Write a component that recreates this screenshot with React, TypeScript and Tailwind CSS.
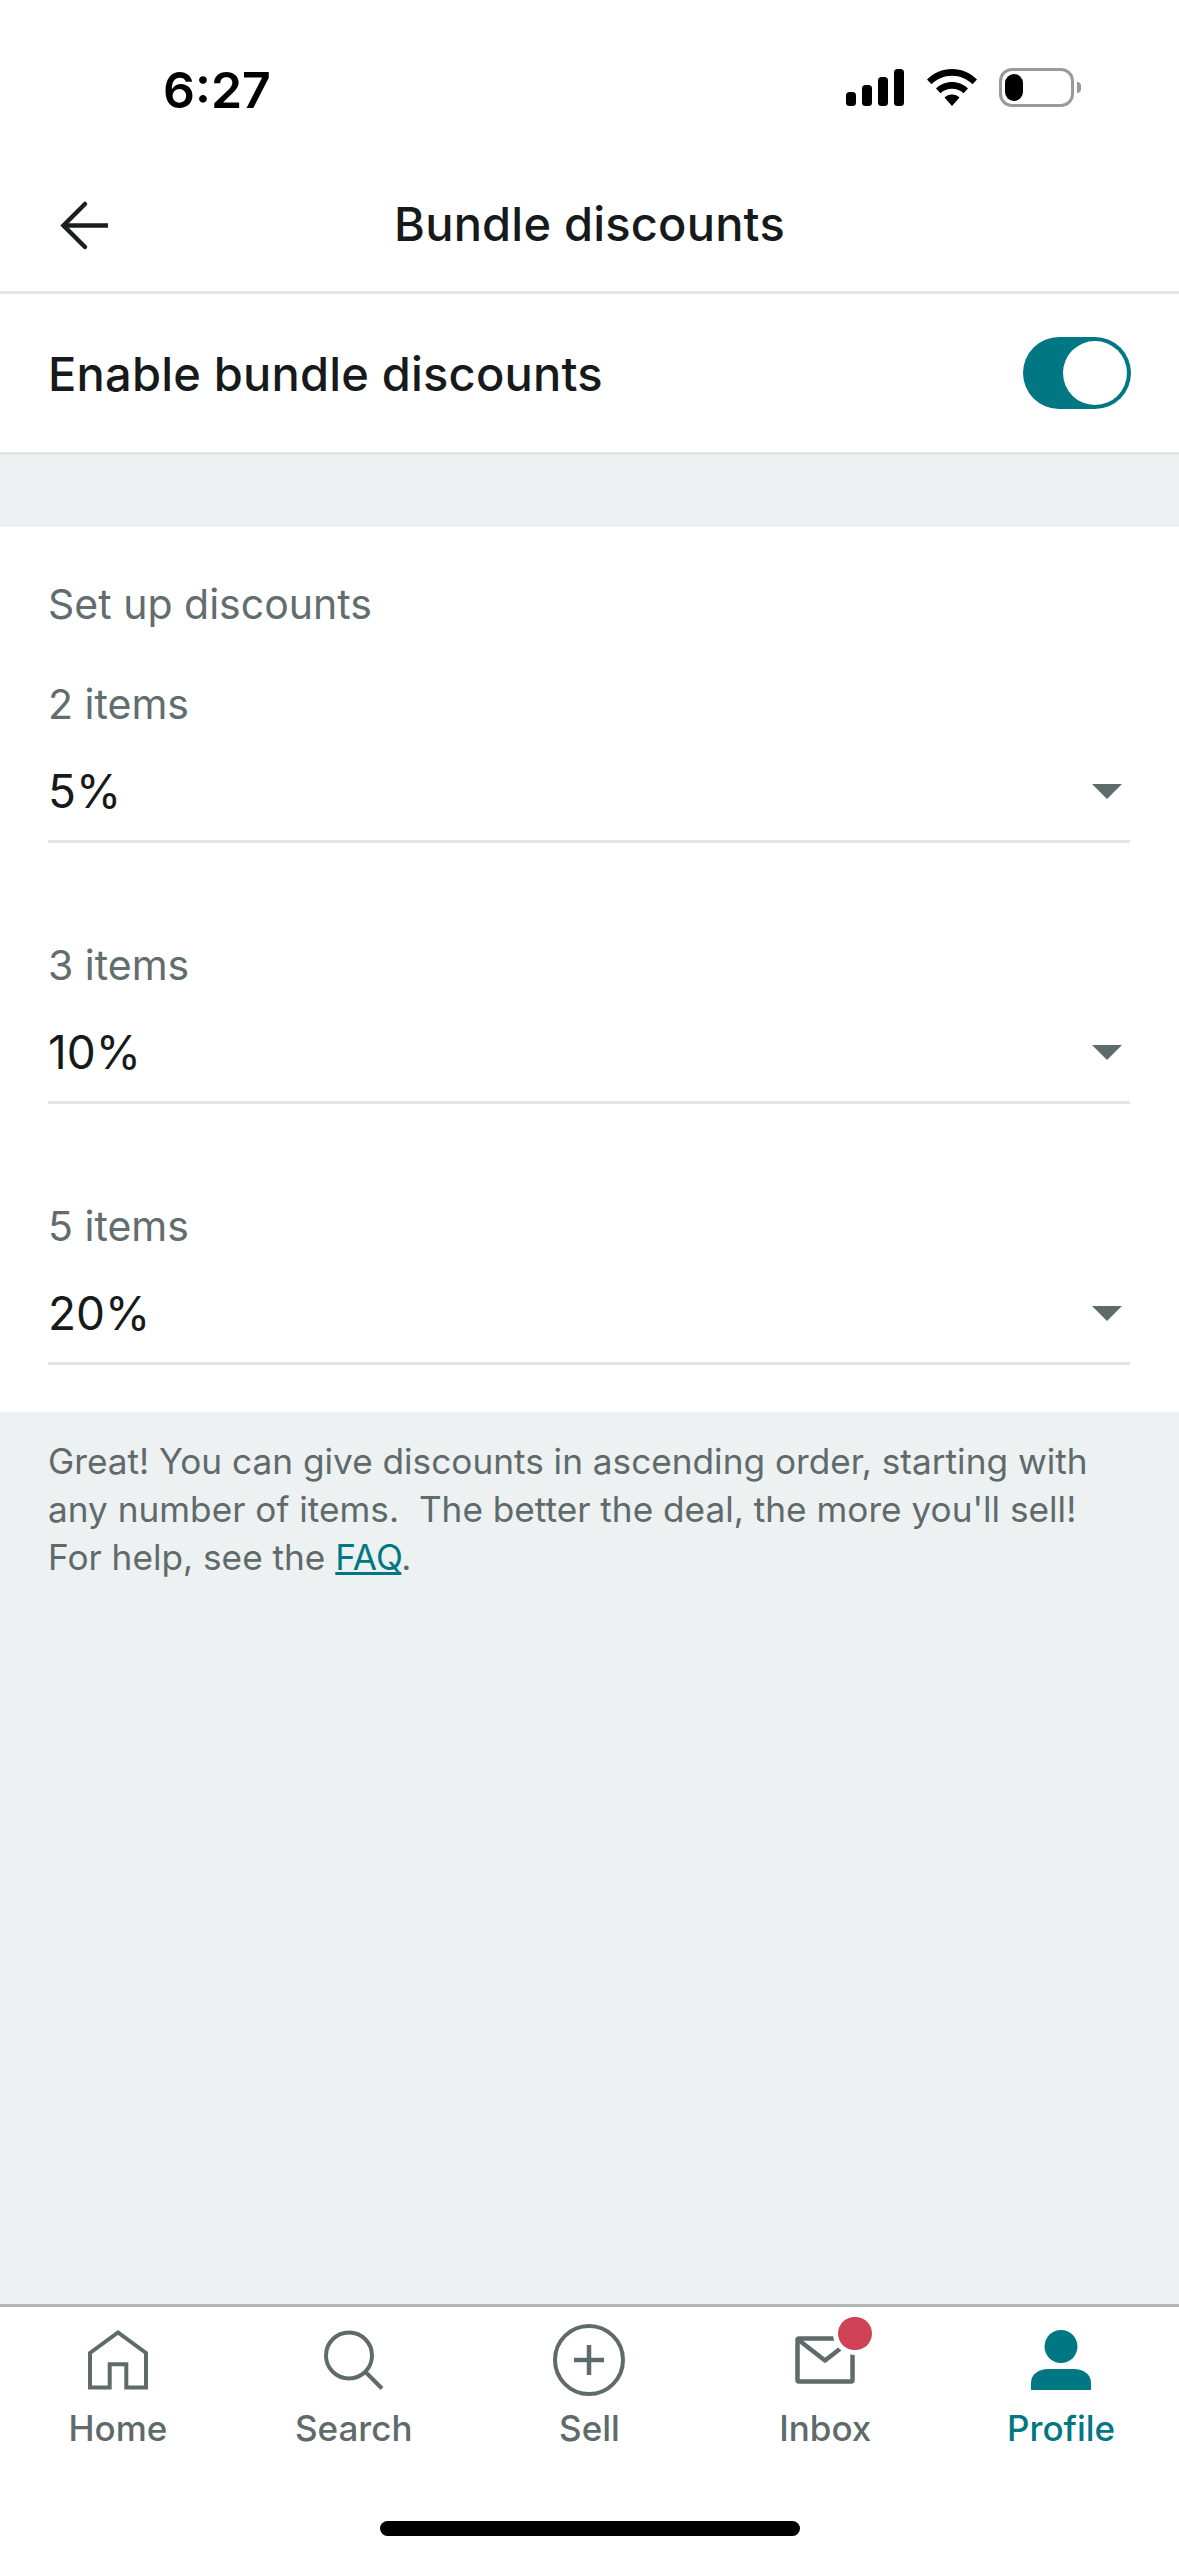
import React from "react";

const rows = [
  { label: "2 items", value: "5%" },
  { label: "3 items", value: "10%" },
  { label: "5 items", value: "20%" },
];

function StatusBar() {
  return (
    <div className="flex h-[138px] items-start justify-between pl-[163px] pr-[98px] pt-[59px]">
      <span className="pt-[3px] text-[50px] leading-[56px] font-semibold text-black">6:27</span>
      <div className="flex items-center pt-[9px]">
        <svg width="58" height="37" viewBox="0 0 58 37" fill="#000">
          <rect x="0" y="23" width="10" height="14" rx="3.5" />
          <rect x="16" y="16" width="10" height="21" rx="3.5" />
          <rect x="32" y="8" width="10" height="29" rx="3.5" />
          <rect x="48" y="0" width="10" height="37" rx="3.5" />
        </svg>
        <svg className="ml-[23px]" width="50" height="37" viewBox="0 0 50 37" fill="#000">
          <path d="M0 10.5C6.5 4 15.5 0 25 0s18.500 4 25 10.500l-4.500 4.800C40 10 33 6.800 25 6.800S10 10 4.500 15.300z" />
          <path d="M9 19.500C13 15.500 18.800 13 25 13s12 2.500 16 6.500l-4.500 4.800C33.500 21.500 29.500 19.800 25 19.800s-8.500 1.700-11.500 4.500z" />
          <path d="M17.500 28.500c2-1.900 4.600-3 7.500-3s5.500 1.100 7.500 3L25 37z" />
        </svg>
        <div className="ml-[22px] flex h-[39px] w-[75px] items-center rounded-[13px] border-[3px] border-[#9a9a9a] pl-[3px]">
          <div className="h-[27px] w-[18px] rounded-[9px] bg-black" />
        </div>
        <div className="ml-[3px] h-[11px] w-[4px] rounded-r-full bg-[#9a9a9a]" />
      </div>
    </div>
  );
}

function Header() {
  return (
    <div className="relative flex h-[156px] items-center justify-center border-b-[3px] border-[#e6e7e7] pt-[18px]">
      <svg className="absolute left-[59px] top-[62px]" width="52" height="52" viewBox="0 0 52 52" fill="none" stroke="#1c1f20" strokeWidth="4.500" strokeLinecap="round">
        <path d="M26 4 4.500 25.500 26 47" />
        <path d="M4.500 25.500H49" strokeLinecap="butt" />
      </svg>
      <h1 className="text-[47px] leading-[56px] font-medium tracking-[0.2px] text-[#171a1b]">Bundle discounts</h1>
    </div>
  );
}

function ToggleRow() {
  return (
    <div className="flex h-[161px] items-center justify-between border-b-[3px] border-[#e3e5e5] pl-[48px] pr-[48px]">
      <span className="pt-[2px] text-[47px] leading-[56px] font-medium tracking-[0.2px] text-[#171a1b]">Enable bundle discounts</span>
      <div className="flex h-[72px] w-[108px] items-center justify-end rounded-full bg-[#017783] pr-[4px]">
        <div className="h-[64px] w-[64px] rounded-full bg-white" />
      </div>
    </div>
  );
}

function DiscountSelect({ label, value }: { label: string; value: string }) {
  return (
    <div className="h-[261px]">
      <div className="text-[41px] leading-[50px] text-[#626d6e]">{label}</div>
      <div className="mt-[35px] flex h-[54px] items-center justify-between pr-[8px]">
        <span className="text-[46px] leading-[54px] text-[#171a1b]">{value}</span>
        <div className="h-0 w-0 border-x-[15px] border-t-[15px] border-x-transparent border-t-[#5f6a6b]" />
      </div>
      <div className="mt-[22px] h-[3px] bg-[#e3e5e5]" />
    </div>
  );
}

function NavItem({ label, active, children }: { label: string; active?: boolean; children: React.ReactNode }) {
  return (
    <div className="flex flex-1 flex-col items-center">
      <div className="relative flex h-[72px] items-center justify-center">{children}</div>
      <span className={`mt-[10px] text-[35px] leading-[44px] font-medium ${active ? "text-[#017783]" : "text-[#5f6a6b]"}`}>
        {label}
      </span>
    </div>
  );
}

function BottomNav() {
  return (
    <div className="h-[252px] border-t-[3px] border-[#b4b6b6] bg-white">
      <div className="flex pt-[17px]">
        <NavItem label="Home">
          <svg width="60" height="60" viewBox="0 0 60 60" fill="none" stroke="#5f6a6b" strokeWidth="4">
            <path d="M2 57.500V23L30 2.500 58 23v34.500H38.300V34.300H21.700v23.200z" />
          </svg>
        </NavItem>
        <NavItem label="Search">
          <svg width="60" height="60" viewBox="0 0 60 60" fill="none" stroke="#5f6a6b" strokeWidth="4">
            <circle cx="25" cy="25.500" r="23" />
            <path d="M42 42.500l16 16" />
          </svg>
        </NavItem>
        <NavItem label="Sell">
          <svg width="72" height="72" viewBox="0 0 72 72" fill="none" stroke="#5f6a6b" strokeWidth="4">
            <circle cx="36" cy="36" r="34" />
            <path d="M36 21v30M21 36h30" strokeWidth="4.500" />
          </svg>
        </NavItem>
        <NavItem label="Inbox">
          <svg width="60" height="48" viewBox="0 0 60 48" fill="none" stroke="#5f6a6b" strokeWidth="4.500" strokeLinejoin="round">
            <rect x="2.500" y="2.500" width="55" height="43" rx="1.500" />
            <path d="M3 3.500 30 24.500 57 3.500" />
          </svg>
          <div className="absolute left-[43px] top-[-7px] h-[33px] w-[34px] rounded-full bg-[#cf4256] ring-[5px] ring-white" />
        </NavItem>
        <NavItem label="Profile" active>
          <svg width="60" height="60" viewBox="0 0 60 60" fill="#017783">
            <circle cx="30" cy="16.500" r="16.500" />
            <path d="M0 60V53C0 44 8 39 17 39h26c9 0 17 5 17 14v7z" />
          </svg>
        </NavItem>
      </div>
      <div className="mx-auto mt-[71px] h-[15px] w-[420px] rounded-full bg-black" />
    </div>
  );
}

export default function App() {
  return (
    <div className="flex h-[2556px] w-[1179px] flex-col overflow-hidden bg-[#edf1f2] font-['Inter',sans-serif]">
      <div className="bg-white">
        <StatusBar />
        <Header />
        <ToggleRow />
      </div>
      <div className="mt-[72px] h-[885px] bg-white pl-[48px] pr-[49px] pt-[48px]">
        <div className="text-[41px] leading-[58px] text-[#626d6e]">Set up discounts</div>
        <div className="mt-[46px]">
          {rows.map((r) => (
            <DiscountSelect key={r.label} label={r.label} value={r.value} />
          ))}
        </div>
      </div>
      <p className="flex-1 px-[48px] pt-[25px] text-[35.2px] leading-[48px] text-[#5f6a6b]">
        Great! You can give discounts in ascending order, starting with
        <br />
        any number of items.&nbsp; The better the deal, the more you'll sell!
        <br />
        For help, see the <span className="text-[#017783] underline">FAQ</span>.
      </p>
      <BottomNav />
    </div>
  );
}
